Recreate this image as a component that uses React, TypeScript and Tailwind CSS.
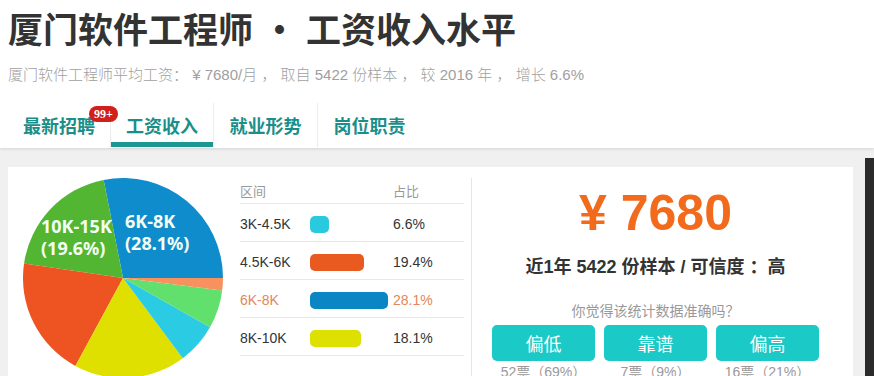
import React from "react";

const slices = [
  { v: 28.1, c: "#0f8ccc" },
  { v: 19.6, c: "#53b633" },
  { v: 19.4, c: "#ee5421" },
  { v: 18.1, c: "#dfe000" },
  { v: 6.6, c: "#2bcbe3" },
  { v: 6.2, c: "#62e06e" },
  { v: 2.0, c: "#f7925f" },
];

function Pie() {
  const cx = 100, cy = 100, r = 100;
  let a = 0;
  const pt = (deg: number) => {
    const t = (deg * Math.PI) / 180;
    return [cx + r * Math.cos(t), cy - r * Math.sin(t)];
  };
  return (
    <svg width="200" height="200" viewBox="0 0 200 200" className="block">
      {slices.map((s, i) => {
        const a0 = a;
        const a1 = a + s.v * 3.6;
        a = a1;
        const [x0, y0] = pt(a0);
        const [x1, y1] = pt(a1);
        const large = a1 - a0 > 180 ? 1 : 0;
        return (
          <path
            key={i}
            d={`M${cx} ${cy} L${x0} ${y0} A${r} ${r} 0 ${large} 0 ${x1} ${y1} Z`}
            fill={s.c}
          />
        );
      })}
      <g fill="#f4fff4" fontFamily="'Noto Sans', sans-serif" fontWeight="700" fontSize="18">
        <text x="102" y="50">6K-8K</text>
        <text x="102" y="72">(28.1%)</text>
        <text x="18" y="55">10K-15K</text>
        <text x="18" y="77">(19.6%)</text>
      </g>
    </svg>
  );
}

const rows = [
  { k: "3K-4.5K", w: 19, c: "#29c9e0", p: "6.6%", hl: false },
  { k: "4.5K-6K", w: 54, c: "#e85a20", p: "19.4%", hl: false },
  { k: "6K-8K", w: 78, c: "#0a86c4", p: "28.1%", hl: true },
  { k: "8K-10K", w: 51, c: "#dde000", p: "18.1%", hl: false },
];

export default function App() {
  return (
    <div
      className="w-[874px] h-[376px] overflow-hidden bg-[#f0f0f0] flex flex-col"
      style={{ fontFamily: "'Liberation Sans', 'Noto Sans CJK SC', sans-serif" }}
    >
      <div className="h-[148px] shrink-0 bg-white shadow-[0_1px_3px_rgba(0,0,0,0.12)] relative z-10">
        <div className="pt-[6px] pl-[8px] text-[35px] leading-[44px] font-bold text-[#333] whitespace-nowrap" style={{ fontFamily: "'Noto Sans CJK SC', sans-serif" }}>
          厦门软件工程师<span className="mx-[9px]">•</span>工资收入水平
        </div>
        <div className="mt-[15px] pl-[8px] text-[15px] leading-[20px] font-light text-[#a0a0a0] whitespace-nowrap">
          厦门软件工程师平均工资： ¥ 7680/月 ， 取自 5422 份样本 ， 较 2016 年 ， 增长 6.6%
        </div>
        <div className="mt-[18px] pl-[8px] flex text-[18px] font-bold text-[#1a8f8a]" style={{ fontFamily: "'Noto Sans CJK SC', sans-serif" }}>
          <div className="relative w-[102px] h-[44px] flex items-center justify-center">
            最新招聘
            <div className="absolute left-[81px] top-[3px] w-[29px] h-[16px] rounded-full bg-[#d11f1a] text-white text-[12px] leading-[16px] font-bold text-center z-10" style={{ fontFamily: "'Liberation Serif', serif" }}>
              99+
            </div>
          </div>
          <div className="relative w-[103px] h-[44px] flex items-center justify-center border-l border-[#ececec]">
            工资收入
            <div className="absolute left-0 right-0 bottom-0 h-[5px] bg-[#1b9691]" />
          </div>
          <div className="relative w-[104px] h-[44px] flex items-center justify-center border-l border-[#ececec]">
            就业形势
          </div>
          <div className="relative w-[104px] h-[44px] flex items-center justify-center border-l border-[#ececec]">
            岗位职责
          </div>
        </div>
      </div>

      <div className="flex pl-[8px] flex-1">
        <div className="mt-[19px] w-[845px] h-[220px] bg-white flex shrink-0">
          <div className="w-[232px] pl-[15px] pt-[11px] shrink-0 overflow-hidden">
            <Pie />
          </div>
          <div className="w-[224px] pt-[11px] shrink-0">
            <div className="h-[26px] flex items-center border-b border-[#e8e8e8] text-[13px] text-[#999]" style={{ fontFamily: "'Noto Sans CJK SC', sans-serif" }}>
              <div className="w-[153px]">区间</div>
              <div>占比</div>
            </div>
            {rows.map((r) => (
              <div
                key={r.k}
                className={`h-[38px] pt-[4px] flex items-center border-b border-[#e8e8e8] text-[14px] ${r.hl ? "text-[#e3875a]" : "text-[#333]"}`}
              >
                <div className="w-[70px]">{r.k}</div>
                <div className="w-[83px] flex items-center">
                  <div className="h-[17px] rounded-[5px]" style={{ width: r.w, background: r.c }} />
                </div>
                <div>{r.p}</div>
              </div>
            ))}
          </div>
          <div className="ml-[7px] mt-[11px] w-px bg-[#e6e6e6] shrink-0" />
          <div className="flex-1 pr-[14px] flex flex-col items-center">
            <div className="mt-[21px] text-[50px] leading-[50px] font-bold text-[#f26b1d] whitespace-nowrap">
              ¥ 7680
            </div>
            <div className="mt-[17px] text-[18px] leading-[24px] font-bold text-[#333] whitespace-nowrap">
              近1年 5422 份样本 / 可信度 ：高
            </div>
            <div className="mt-[22px] text-[14px] leading-[20px] text-[#999] whitespace-nowrap">
              你觉得该统计数据准确吗？
            </div>
            <div className="mt-[4px] flex gap-[9px]">
              {["偏低", "靠谱", "偏高"].map((t) => (
                <div key={t} className="w-[103px] h-[36px] rounded-[5px] bg-[#1bc9c6] text-white text-[18px] flex items-center justify-center" style={{ fontFamily: "'Noto Sans CJK SC', sans-serif" }}>
                  {t}
                </div>
              ))}
            </div>
            <div className="mt-[1px] flex gap-[9px] text-[14px] leading-[20px] text-[#999]">
              <div className="w-[103px] text-center whitespace-nowrap">52票（69%）</div>
              <div className="w-[103px] text-center whitespace-nowrap">7票（9%）</div>
              <div className="w-[103px] text-center whitespace-nowrap">16票（21%）</div>
            </div>
          </div>
        </div>
        <div className="ml-[12px] mt-[10px] w-[9px] bg-[#2b2b2b] shrink-0" />
      </div>
    </div>
  );
}
